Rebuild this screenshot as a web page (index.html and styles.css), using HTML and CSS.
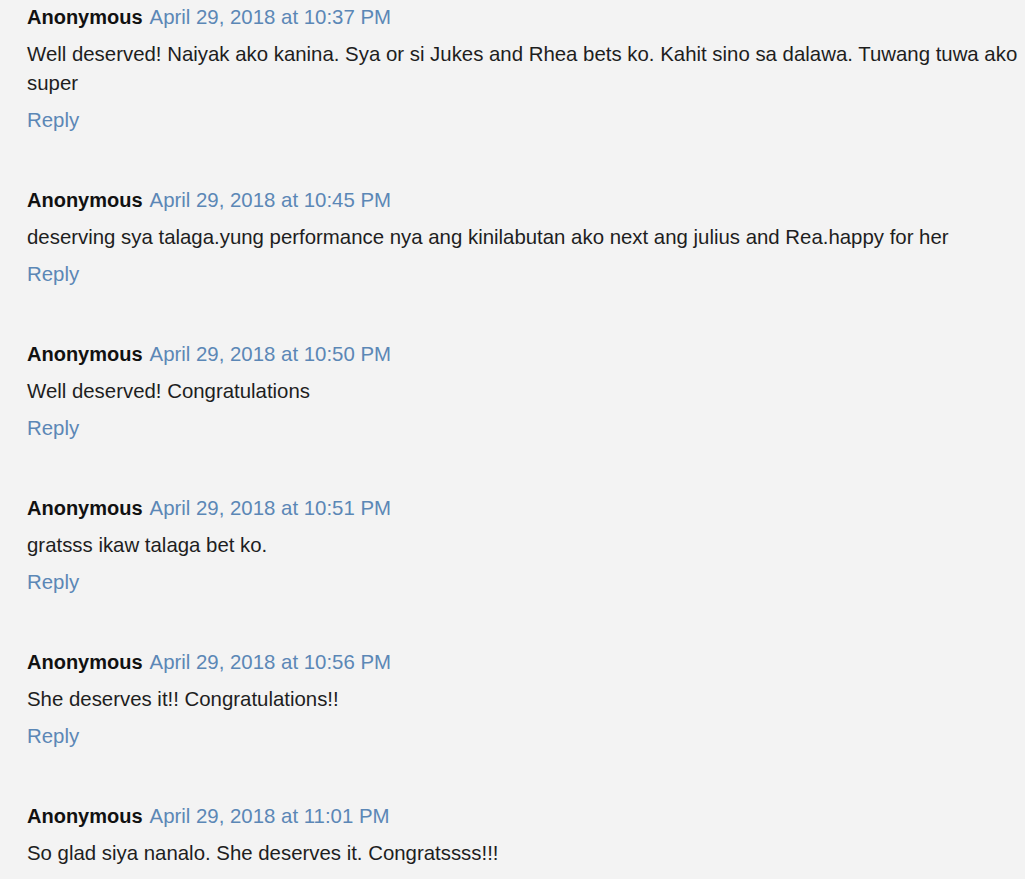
FILE: index.html
```html
<!DOCTYPE html>
<html lang="en">
<head>
    <meta charset="UTF-8">
    <meta name="viewport" content="width=device-width, initial-scale=1.0">
    <title>Comments</title>
    <link rel="stylesheet" href="styles.css">
</head>
<body>
    <div class="comments">
        <div class="comment">
            <div class="comment-header">
                <span class="user">Anonymous</span>
                <a class="date" href="#">April 29, 2018 at 10:37 PM</a>
            </div>
            <p class="comment-body">Well deserved! Naiyak ako kanina. Sya or si Jukes and Rhea bets ko. Kahit sino sa dalawa. Tuwang tuwa ako super</p>
            <a class="reply" href="#">Reply</a>
        </div>

        <div class="comment">
            <div class="comment-header">
                <span class="user">Anonymous</span>
                <a class="date" href="#">April 29, 2018 at 10:45 PM</a>
            </div>
            <p class="comment-body">deserving sya talaga.yung performance nya ang kinilabutan ako next ang julius and Rea.happy for her</p>
            <a class="reply" href="#">Reply</a>
        </div>

        <div class="comment">
            <div class="comment-header">
                <span class="user">Anonymous</span>
                <a class="date" href="#">April 29, 2018 at 10:50 PM</a>
            </div>
            <p class="comment-body">Well deserved! Congratulations</p>
            <a class="reply" href="#">Reply</a>
        </div>

        <div class="comment">
            <div class="comment-header">
                <span class="user">Anonymous</span>
                <a class="date" href="#">April 29, 2018 at 10:51 PM</a>
            </div>
            <p class="comment-body">gratsss ikaw talaga bet ko.</p>
            <a class="reply" href="#">Reply</a>
        </div>

        <div class="comment">
            <div class="comment-header">
                <span class="user">Anonymous</span>
                <a class="date" href="#">April 29, 2018 at 10:56 PM</a>
            </div>
            <p class="comment-body">She deserves it!! Congratulations!!</p>
            <a class="reply" href="#">Reply</a>
        </div>

        <div class="comment">
            <div class="comment-header">
                <span class="user">Anonymous</span>
                <a class="date" href="#">April 29, 2018 at 11:01 PM</a>
            </div>
            <p class="comment-body">So glad siya nanalo. She deserves it. Congratssss!!!</p>
        </div>
    </div>
</body>
</html>
```

FILE: styles.css
```css
body {
    margin: 0;
    background-color: #f3f3f3;
    font-family: "Liberation Sans", Arial, sans-serif;
    font-size: 20.4px;
    line-height: 29px;
    color: #1e1e1e;
}
.comments {
    padding: 3px 0 0 27px;
}
.comment {
    margin-bottom: 51px;
}
.comment-header {
    display: flex;
    gap: 7px;
}
.user {
    font-size: 20px;
    font-weight: bold;
    color: #111;
}
.date {
    color: #5b87b6;
    text-decoration: none;
}
.comment-body {
    margin: 8px 0 0 0;
}
.reply {
    display: block;
    margin-top: 8px;
    color: #5b87b6;
    text-decoration: none;
}
```
